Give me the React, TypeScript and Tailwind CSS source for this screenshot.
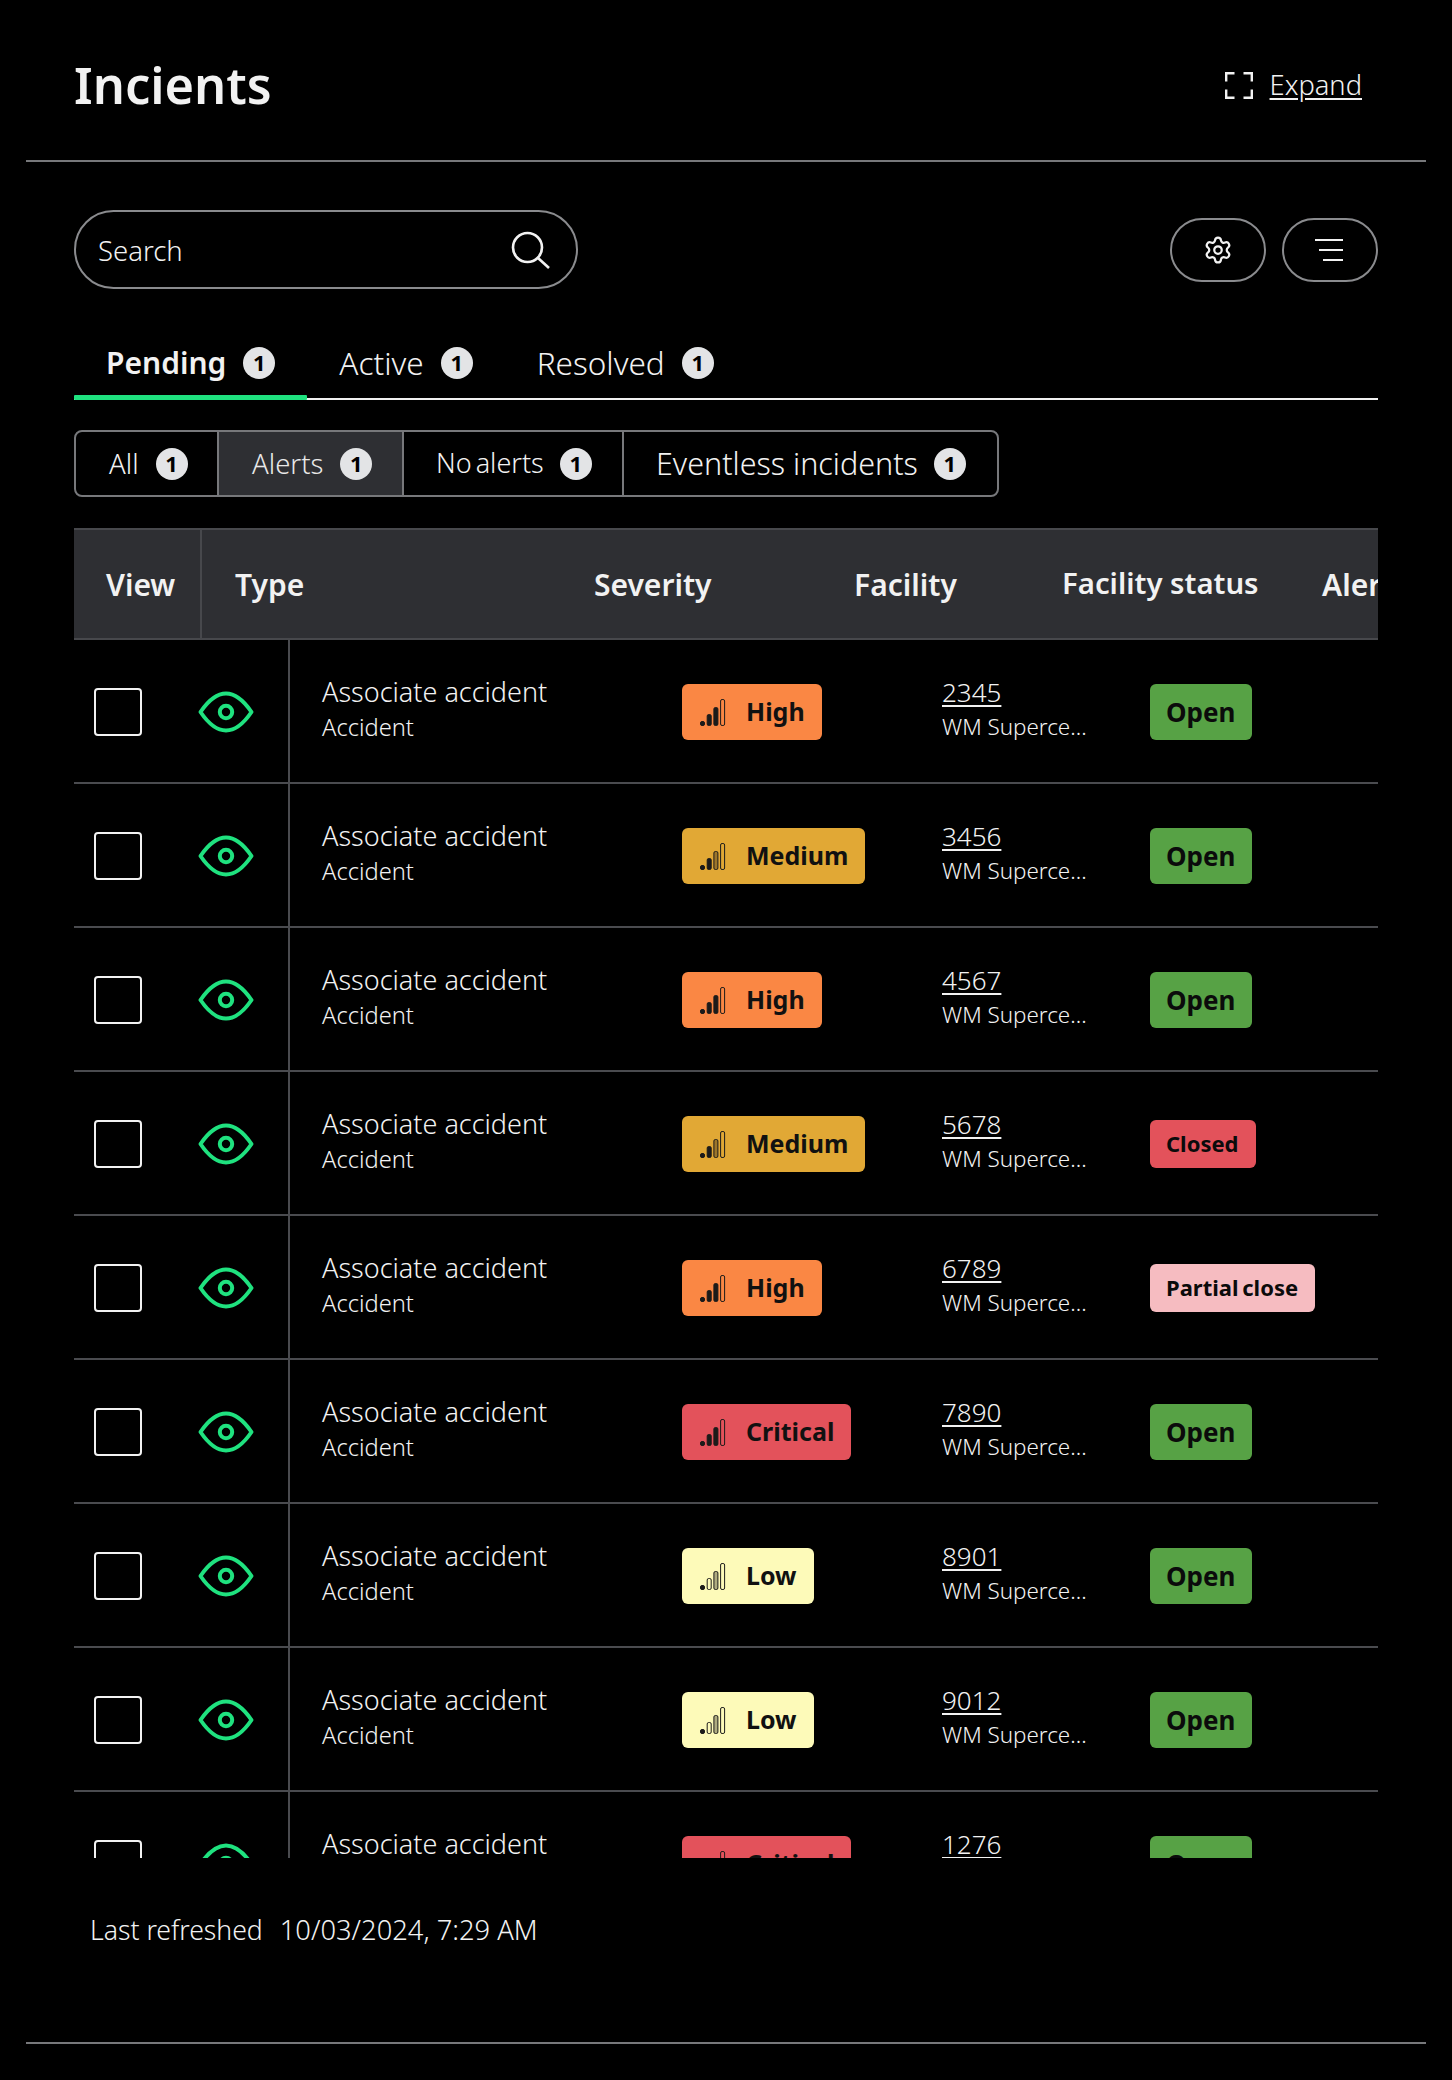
import React from 'react';
import { Settings } from 'lucide-react';

type Severity = 'High' | 'Medium' | 'Critical' | 'Low';
type Status = 'Open' | 'Closed' | 'Partial close';

const rows: { id: string; severity: Severity; status: Status }[] = [
  { id: '2345', severity: 'High', status: 'Open' },
  { id: '3456', severity: 'Medium', status: 'Open' },
  { id: '4567', severity: 'High', status: 'Open' },
  { id: '5678', severity: 'Medium', status: 'Closed' },
  { id: '6789', severity: 'High', status: 'Partial close' },
  { id: '7890', severity: 'Critical', status: 'Open' },
  { id: '8901', severity: 'Low', status: 'Open' },
  { id: '9012', severity: 'Low', status: 'Open' },
  { id: '1276', severity: 'Critical', status: 'Open' },
];

const severityBg: Record<Severity, string> = {
  High: 'bg-[#fa8744]',
  Medium: 'bg-[#e1a835]',
  Critical: 'bg-[#e3525b]',
  Low: 'bg-[#fdfab9]',
};

const severityBars: Record<Severity, number> = { High: 3, Medium: 2, Critical: 3, Low: 1 };

const Count = () => (
  <span className="flex h-[32px] w-[32px] shrink-0 items-center justify-center rounded-full bg-[#e3e4e6] text-[22px] font-bold text-black">
    1
  </span>
);

const SignalIcon = ({ filled }: { filled: number }) => {
  const bars = [
    { x: 0, h: 5 },
    { x: 6.7, h: 12 },
    { x: 13.4, h: 19 },
    { x: 20.1, h: 27 },
  ];
  return (
    <svg width="26" height="27" viewBox="0 0 26 27" className="shrink-0">
      {bars.map((b, i) => (
        <rect
          key={i}
          x={b.x + 0.5}
          y={27 - b.h + 0.5}
          width="4"
          height={b.h - 1}
          rx="1.5"
          fill="#1c1b1a"
          fillOpacity={i < filled ? 1 : i === 2 ? 0.35 : 0}
          stroke="#1c1b1a"
          strokeWidth="1"
        />
      ))}
    </svg>
  );
};

const EyeIcon = () => (
  <svg width="56" height="42" viewBox="0 0 56 42" fill="none" stroke="#1fe27f" strokeWidth="4" className="shrink-0">
    <path d="M2.5 21C11 8.5 19 2.5 28 2.5S45 8.5 53.5 21C45 33.5 37 39.5 28 39.5S11 33.5 2.5 21Z" strokeLinejoin="round" />
    <circle cx="28" cy="21" r="6.2" />
  </svg>
);

const SeverityBadge = ({ severity }: { severity: Severity }) => (
  <span className={`inline-flex h-[56px] items-center gap-[20px] rounded-[6px] pl-[18px] pr-[17px] text-[25px] font-bold text-[#111111] ${severityBg[severity]}`}>
    <SignalIcon filled={severityBars[severity]} />
    {severity}
  </span>
);

const StatusBadge = ({ status }: { status: Status }) => {
  if (status === 'Open') {
    return (
      <span className="inline-flex h-[56px] items-center rounded-[6px] bg-[#57a245] pl-[16px] pr-[17px] text-[26px] font-bold text-[#0b0b0b]">
        Open
      </span>
    );
  }
  return (
    <span
      className={`inline-flex h-[48px] items-center rounded-[6px] pb-[2px] pl-[16px] pr-[17px] text-[22px] font-bold text-[#0b0b0b] [word-spacing:-2px] ${
        status === 'Closed' ? 'bg-[#e3525b]' : 'bg-[#f6bcc1]'
      }`}
    >
      {status}
    </span>
  );
};

const Tab = ({ label, active }: { label: string; active?: boolean }) => (
  <div className={`relative flex items-center gap-[17px] px-[32px] pb-[2px] ${active ? 'text-[30px] font-semibold' : 'text-[31.5px] font-light'}`}>
    {label}
    <Count />
    {active && <span className="absolute -bottom-[2px] left-0 right-0 h-[5px] rounded-[1px] bg-[#1fe27f]" />}
  </div>
);

export default function App() {
  return (
    <div className="h-[2080px] w-[1452px] overflow-hidden bg-black text-[#f2f2f2] [font-family:'Noto_Sans',sans-serif]">
      {/* Header */}
      <div className="flex h-[160px] items-center justify-between pl-[74px] pr-[90px] pt-[10px]">
        <h1 className="text-[50.5px] font-semibold leading-none">Incients</h1>
        <div className="flex items-center gap-[17px]">
          <svg width="28" height="27" viewBox="0 0 28 27" fill="none" stroke="#f2f2f2" strokeWidth="2.4">
            <path d="M9.5 1.2H1.2V9.5M18.5 1.2H26.8V9.5M9.5 25.8H1.2V17.5M18.5 25.8H26.8V17.5" />
          </svg>
          <span className="text-[27.3px] font-light underline underline-offset-[3px]">Expand</span>
        </div>
      </div>
      <div className="mx-[26px] h-[2px] bg-[#77787b]" />

      <div className="px-[74px]">
        {/* Search and actions */}
        <div className="mt-[48px] flex items-center justify-between">
          <div className="flex h-[79px] w-[504px] items-center justify-between rounded-full border-2 border-[#8a8b8e] pl-[22px] pr-[25px] text-[27.5px] font-light">
            <span className="pt-[2px]">Search</span>
            <svg width="40" height="38" viewBox="0 0 40 38" fill="none" stroke="#f2f2f2" strokeWidth="2.6">
              <circle cx="16.5" cy="16.5" r="14.5" />
              <path d="M27 27L38 37" />
            </svg>
          </div>
          <div className="flex gap-[16px]">
            <button className="flex h-[64px] w-[96px] items-center justify-center rounded-full border-2 border-[#8a8b8e]">
              <Settings size={30} strokeWidth={1.8} />
            </button>
            <button className="flex h-[64px] w-[96px] flex-col items-end justify-center gap-[8px] rounded-full border-2 border-[#8a8b8e] pr-[33px]">
              <span className="h-[2px] w-[28px] bg-[#f2f2f2]" />
              <span className="h-[2px] w-[24px] bg-[#f2f2f2]" />
              <span className="h-[2px] w-[20px] bg-[#f2f2f2]" />
            </button>
          </div>
        </div>

        {/* Tabs */}
        <div className="mt-[40px] flex h-[71px] border-b-2 border-[#f0f0f0]">
          <Tab label="Pending" active />
          <Tab label="Active" />
          <Tab label="Resolved" />
        </div>

        {/* Filters */}
        <div className="mt-[30px] flex h-[67px] w-[925px] rounded-[8px] border-2 border-[#77787b] text-[27.5px] font-light">
          <div className="flex w-[143px] items-center gap-[17px] border-r-2 border-[#77787b] pl-[33px]">
            All
            <Count />
          </div>
          <div className="flex w-[185px] items-center gap-[17px] border-r-2 border-[#77787b] bg-[#2e2f33] pl-[33px] text-[#e8e8e8]">
            Alerts
            <Count />
          </div>
          <div className="flex w-[220px] items-center gap-[16px] border-r-2 border-[#77787b] pl-[32px] text-[27px] [word-spacing:-3px]">
            No alerts
            <Count />
          </div>
          <div className="flex flex-1 items-center gap-[16px] pl-[32px] text-[30.5px]">
            Eventless incidents
            <Count />
          </div>
        </div>

        {/* Table */}
        <div className="mt-[31px] h-[1330px] overflow-hidden">
          <div className="flex h-[112px] items-center border-y-2 border-[#47484c] bg-[#2e2f33] text-[30px] font-semibold">
            <div className="flex h-full w-[128px] shrink-0 items-center border-r-2 border-[#47484c] pl-[32px]">View</div>
            <div className="w-[360px] shrink-0 pl-[33px]">Type</div>
            <div className="w-[260px] shrink-0 pl-[32px]">Severity</div>
            <div className="w-[208px] shrink-0 pl-[32px]">Facility</div>
            <div className="w-[260px] shrink-0 pl-[32px] text-[29.3px]">Facility status</div>
            <div className="shrink-0 pl-[32px]">Alert</div>
          </div>
          {rows.map((row) => (
            <div key={row.id} className="flex h-[144px] border-b-2 border-[#4a4b4f]">
              <div className="flex w-[216px] shrink-0 items-center border-r-2 border-[#4a4b4f] pl-[20px] pt-[2px]">
                <span className="h-[48px] w-[48px] shrink-0 rounded-[4px] border-2 border-[#f2f2f2]" />
                <span className="ml-[56px]">
                  <EyeIcon />
                </span>
              </div>
              <div className="flex w-[360px] shrink-0 flex-col justify-center pb-[4px] pl-[32px] font-light">
                <span className="text-[27px] leading-[36px]">Associate accident</span>
                <span className="text-[23.7px] leading-[34px]">Accident</span>
              </div>
              <div className="flex w-[260px] shrink-0 items-center pl-[32px] pt-[2px]">
                <SeverityBadge severity={row.severity} />
              </div>
              <div className="flex w-[208px] shrink-0 flex-col justify-center pb-[4px] pl-[32px] font-light">
                <span className="text-[26px] leading-[36px] underline underline-offset-[3px]">{row.id}</span>
                <span className="whitespace-nowrap text-[22.4px] leading-[34px]">WM Superce...</span>
              </div>
              <div className="flex w-[260px] shrink-0 items-center pl-[32px] pt-[2px]">
                <StatusBadge status={row.status} />
              </div>
            </div>
          ))}
        </div>

        {/* Footer */}
        <div className="mt-[52px] flex gap-[17px] pl-[16px] font-light leading-[40px]">
          <span className="text-[26.6px]">Last refreshed</span>
          <span className="text-[27.3px]">10/03/2024, 7:29 AM</span>
        </div>
      </div>
      <div className="mx-[26px] mt-[92px] h-[2px] bg-[#77787b]" />
    </div>
  );
}
